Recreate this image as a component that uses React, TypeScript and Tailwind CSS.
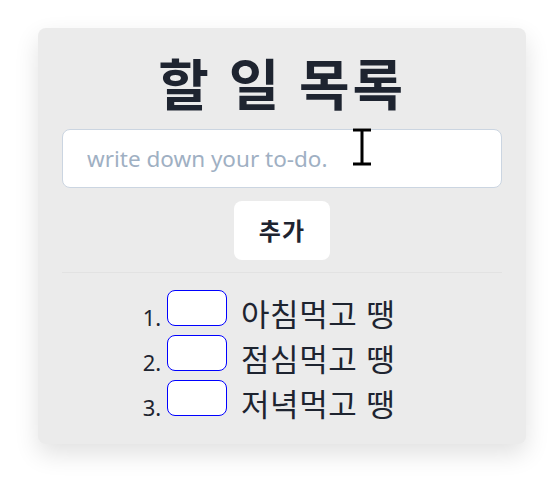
import React from 'react';

const todos = ['아침먹고 땡', '점심먹고 땡', '저녁먹고 땡'];

export default function App() {
  return (
    <div className="min-h-[484px] w-[558px] bg-white pt-[28px] font-['Noto_Sans','Noto_Sans_CJK_KR',sans-serif]">
      <div className="relative ml-[38px] w-[488px] rounded-lg bg-[#ebebeb] px-6 pb-[19px] pt-[20px] shadow-[0_10px_24px_rgba(0,0,0,0.12)]">
        <h1 className="text-center text-[55px] font-bold leading-[72px] tracking-[0.05em] text-[#1e2430]">
          할 일 목록
        </h1>

        <input
          type="text"
          placeholder="write down your to-do."
          className="mt-[9px] h-[59px] w-full rounded-lg border border-[#cbd5e1] bg-white px-[24px] text-[22.5px] text-[#1e2430] outline-none placeholder:text-[#9fb0c3]"
        />

        {/* mouse cursor */}
        <svg className="absolute left-[313px] top-[100px]" width="22" height="38" viewBox="0 0 22 38">
          <path d="M2 2h18M11 2v34M2 36h18" stroke="#fff" strokeWidth="5" fill="none" />
          <path d="M2 2h18M11 2v34M2 36h18" stroke="#000" strokeWidth="3" fill="none" />
        </svg>

        <div className="mt-[13px] flex justify-center">
          <button className="h-[59px] w-[96px] rounded-lg bg-white text-[24px] font-bold tracking-[0.05em] text-[#1e2430]">
            추가
          </button>
        </div>

        <div className="mt-[12px] border-t border-[#e2e2e2]" />

        <ol className="mt-[17px] list-inside list-decimal pr-[26px] text-center text-[22px] text-[#1e2430]">
          {todos.map((t) => (
            <li key={t} className="h-[45px] leading-[45px]">
              <input
                type="text"
                className="h-[36px] w-[60px] rounded-lg border border-[#0000ff] bg-white align-[9px] outline-none"
              />
              <span className="ml-[14px] text-[31px] tracking-[0.02em]">{t}</span>
            </li>
          ))}
        </ol>
      </div>
    </div>
  );
}
